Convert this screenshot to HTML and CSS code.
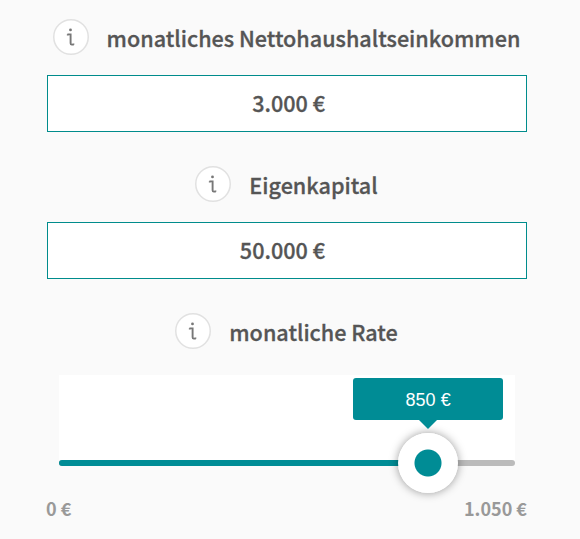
FILE: index.html
```
<!DOCTYPE html>
<html lang="de">

<head>
  <meta charset="utf-8">
  <meta name="viewport" content="width=device-width, initial-scale=1">
  <title>Budgetrechner</title>
  <link rel="stylesheet" href="styles.css">
</head>

<body>
  <svg width="0" height="0" class="defs">
    <symbol id="info" viewBox="0 0 36 36">
      <circle cx="18" cy="18" r="17.25" fill="#fff" stroke="#e1e1e1" stroke-width="1.5" />
      <circle cx="17.5" cy="10.9" r="1.4" fill="#777" />
      <path d="M14.4 15.4h3.2v8.8q0 1.4 1.2 1.4h2M14.8 15.2v1.4M20.4 25.8v-1.4" fill="none" stroke="#777" stroke-width="1.9" />
    </symbol>
  </svg>

  <div class="calculator">
    <div class="label">
      <svg class="info"><use href="#info" /></svg>
      <span>monatliches Nettohaushaltseinkommen</span>
    </div>
    <div class="field"><span class="amount">3.000 €</span></div>

    <div class="label">
      <svg class="info"><use href="#info" /></svg>
      <span>Eigenkapital</span>
    </div>
    <div class="field"><span class="amount">50.000 €</span></div>

    <div class="label">
      <svg class="info"><use href="#info" /></svg>
      <span>monatliche Rate</span>
    </div>
    <div class="slider">
      <div class="track">
        <div class="fill" style="width: 80.95%"></div>
        <div class="handle" style="left: 80.95%">
          <div class="tooltip">850 €</div>
        </div>
      </div>
    </div>
    <div class="range">
      <span>0 €</span>
      <span>1.050 €</span>
    </div>
  </div>
</body>

</html>
```

FILE: styles.css
```
* {
  box-sizing: border-box;
}

body {
  margin: 0;
  background-color: #fafafa;
  color: #555;
  font-family: "Noto Sans CJK SC", sans-serif;
}

.defs {
  position: absolute;
}

.calculator {
  width: 480px;
  margin-left: 47px;
  padding-top: 19px;
}

.label {
  display: flex;
  align-items: center;
  justify-content: center;
  gap: 18px;
  height: 36px;
  margin-bottom: 20px;
  padding-right: 1px;
  font-size: 21.6px;
  font-weight: 500;
  line-height: 36px;
  white-space: nowrap;
  -webkit-text-stroke: 0.3px #555;
}

.label span {
  padding-top: 2px;
}

.info {
  flex: none;
  width: 36px;
  height: 36px;
}

.field {
  height: 57px;
  margin-bottom: 34px;
  padding-right: 201px;
  border: 1px solid #008c8c;
  background-color: #fff;
  font-size: 21.6px;
  font-weight: 500;
  line-height: 53px;
  text-align: right;
  -webkit-text-stroke: 0.3px #555;
}

.slider {
  width: 456px;
  height: 91px;
  margin: 26px auto 0;
  padding-top: 85px;
  background: linear-gradient(#fff, #fff) no-repeat 0 0 / 100% 88px;
}

.track {
  position: relative;
  height: 6px;
  border-radius: 3px;
  background-color: #bbb;
}

.fill {
  height: 6px;
  border-radius: 3px;
  background-color: #008c95;
}

.handle {
  position: absolute;
  top: -27px;
  width: 60px;
  height: 60px;
  margin-left: -30px;
  border-radius: 50%;
  background: radial-gradient(circle, #008c95 13px, #fff 14px);
  box-shadow: 0 0 10px rgba(0, 0, 0, 0.4);
}

.tooltip {
  position: absolute;
  bottom: 73px;
  left: -45px;
  width: 150px;
  height: 42px;
  border-radius: 3px;
  background-color: #008c95;
  color: #fff;
  font: 18px/45px "Liberation Sans", Arial, sans-serif;
  text-align: center;
}

.tooltip::after {
  content: "";
  position: absolute;
  top: 100%;
  left: 66px;
  border: 9px solid transparent;
  border-top-color: #008c95;
  border-bottom: 0;
}

.range {
  display: flex;
  justify-content: space-between;
  margin-top: 27px;
  margin-left: -1px;
  color: #999;
  font-size: 18px;
  font-weight: 700;
  line-height: 30px;
}
```
